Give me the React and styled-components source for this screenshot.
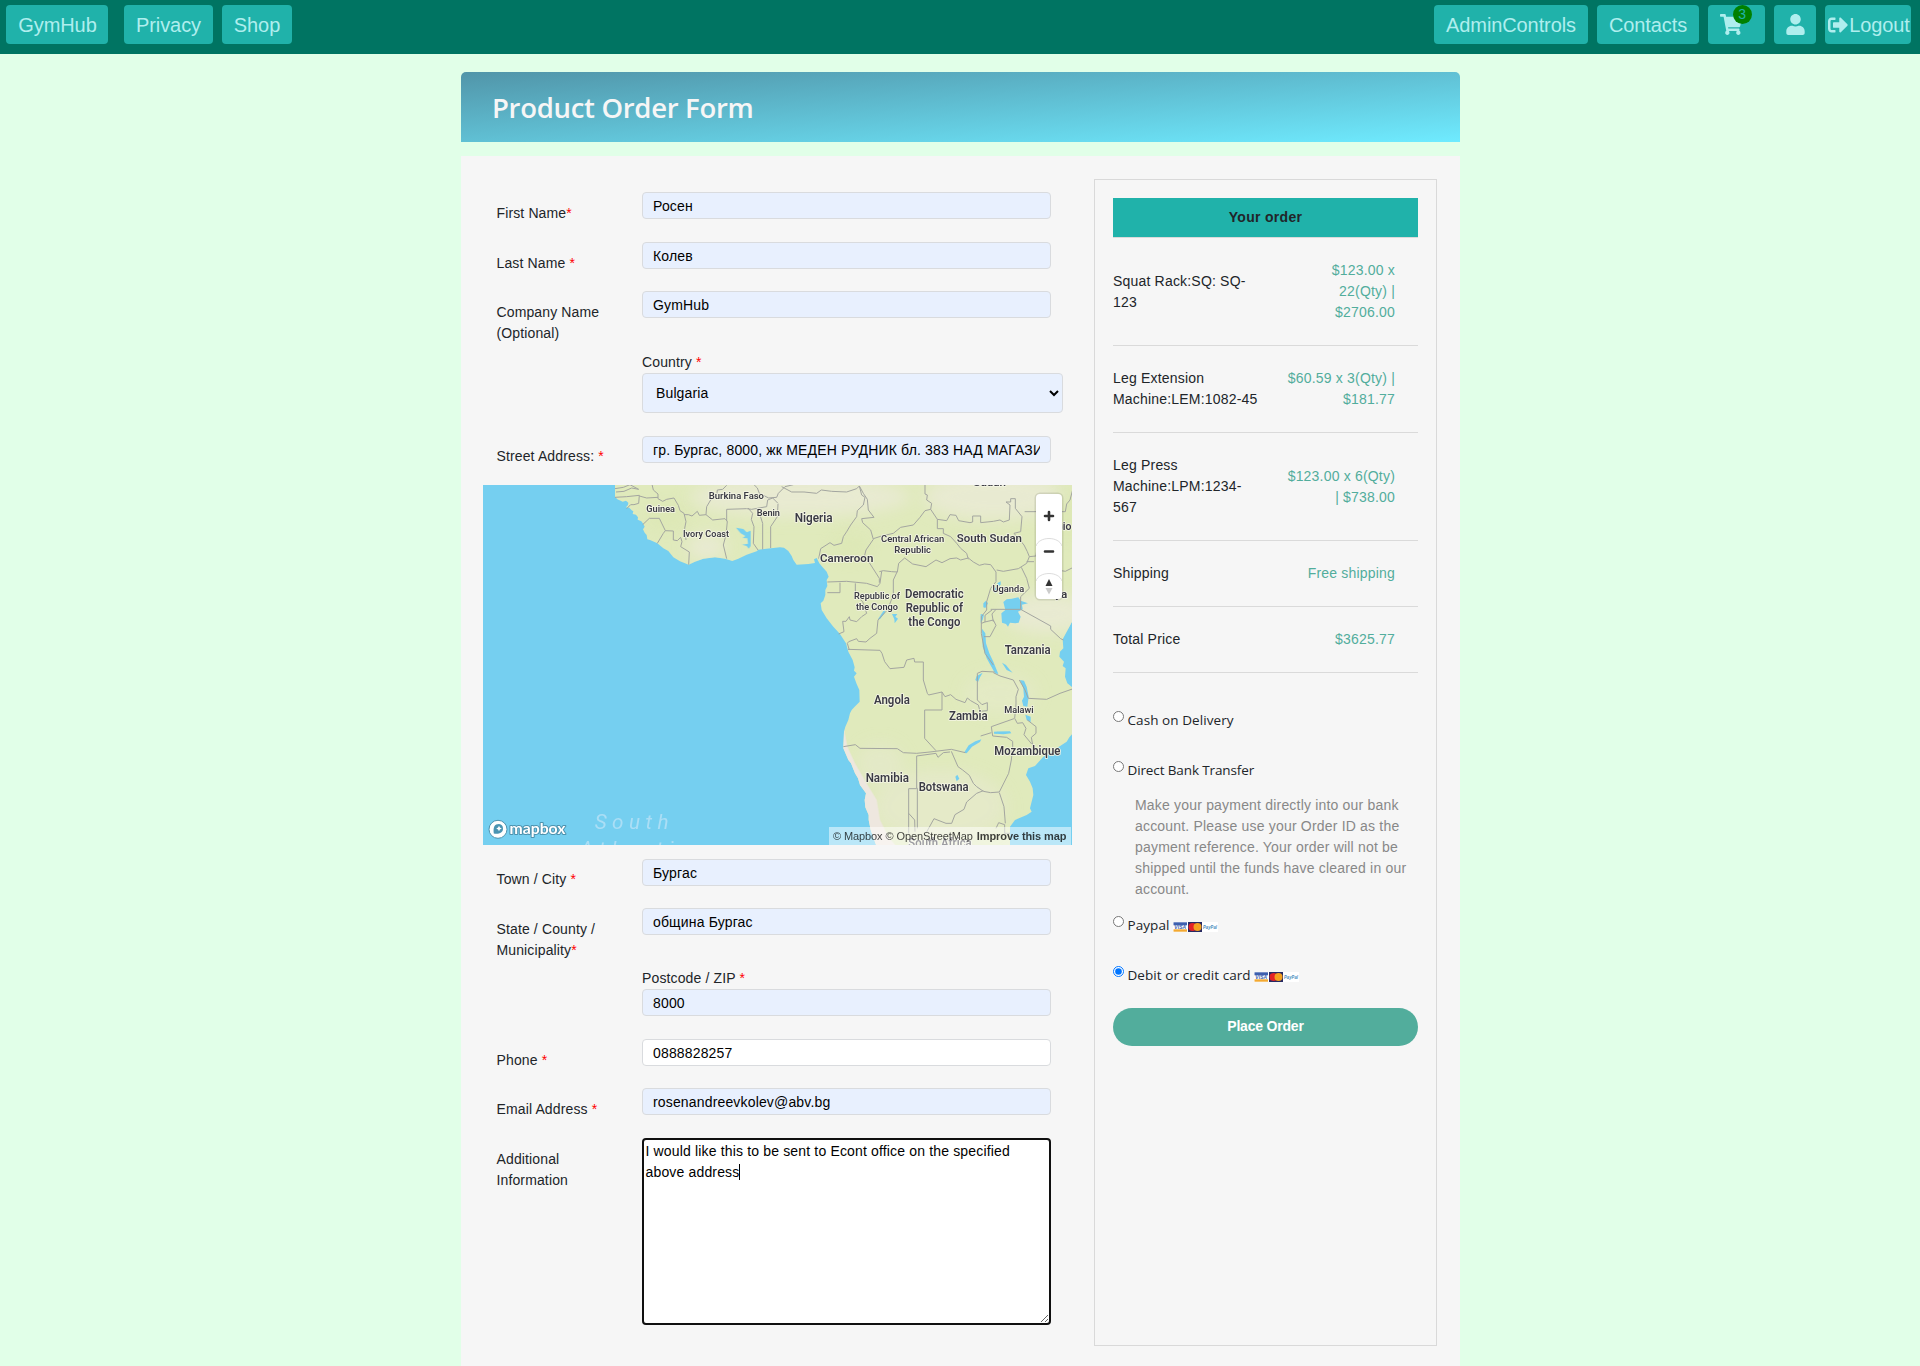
import React from "react";
import styled, { createGlobalStyle } from "styled-components";
import { FaShoppingCart, FaUser, FaSignOutAlt } from "react-icons/fa";

const sans = `"Liberation Sans", Arial, sans-serif`;
const humanist = `"Open Sans", "Noto Sans", sans-serif`;

const GlobalStyle = createGlobalStyle`
  * { box-sizing: border-box; }
  body { margin: 0; background: #e1ffe8; font-family: ${sans}; color: #212529; overflow: hidden; }
`;

const Page = styled.div`
  height: 1366px;
  overflow: hidden;
  background: #e1ffe8;
`;

/* ---------- navigation ---------- */
const Nav = styled.nav`
  display: flex;
  justify-content: space-between;
  height: 54px;
  padding: 5px 9px 10px 6px;
  background: #007462;
`;
const NavGroup = styled.div`
  display: flex;
  gap: 9px;
`;
const NavButton = styled.a`
  display: flex;
  align-items: center;
  justify-content: center;
  width: ${(p) => p.$w}px;
  height: 39px;
  margin-right: ${(p) => p.$after || 0}px;
  padding-left: ${(p) => p.$nudge || 0}px;
  border-radius: 4px;
  background: #20b2aa;
  color: #afeeee;
  font-size: 20px;
  line-height: 30px;
  letter-spacing: -0.1px;
  white-space: nowrap;
  svg { flex: none; }
`;
const CartWrap = styled.span`
  position: relative;
  display: flex;
  margin-right: 12px;
  svg { width: 22px; height: 21px; }
`;
const CartBadge = styled.span`
  position: absolute;
  left: 13px;
  top: -9px;
  width: 19px;
  height: 19px;
  border-radius: 50%;
  background: #008000;
  color: #20b2aa;
  font-size: 14px;
  line-height: 19px;
  text-align: center;
`;

/* ---------- page frame ---------- */
const Container = styled.main`
  width: 999px;
  margin: 18px 0 0 461px;
`;
const TitleBar = styled.header`
  display: flex;
  align-items: center;
  height: 70px;
  padding: 2px 0 0 31px;
  border-radius: 5px 5px 0 0;
  background: linear-gradient(to bottom right, #5195a9, #6febff);
`;
const Title = styled.h1`
  margin: 0;
  color: #f6f6f6;
  font: 600 27.5px/36px ${humanist};
  letter-spacing: -0.3px;
`;
const Panel = styled.div`
  display: flex;
  align-items: flex-start;
  gap: 22px;
  height: 1260px;
  margin-top: 14px;
  padding: 23px 23px 0 22px;
  background: #f6f6f6;
`;

/* ---------- form ---------- */
const Form = styled.form`
  width: 589px;
  padding-top: 13px;
`;
const Row = styled.div`
  display: grid;
  grid-template-columns: 145.5px 1fr;
  height: ${(p) => p.$h}px;
  padding-left: 13.5px;
`;
const Label = styled.label`
  padding-top: ${(p) => p.$top ?? 11}px;
  font-size: 14px;
  line-height: 21px;
  letter-spacing: 0.13px;
  white-space: pre-line;
`;
const Star = styled.span`
  color: #f00;
`;
const Field = styled.div`
  position: relative;
  grid-column: 2;
`;
const FieldCaption = styled.div`
  height: 21px;
  font-size: 14px;
  line-height: 20px;
  letter-spacing: 0.13px;
`;
const Input = styled.input`
  display: block;
  width: 409px;
  height: 27px;
  padding: 0 10px;
  border: 1px solid #d9dbde;
  border-radius: 4px;
  background: ${(p) => (p.$plain ? "#fff" : "#e8f0fe")};
  color: #000;
  font: 14px/21px ${sans};
  letter-spacing: 0.16px;
`;
const Select = styled.select`
  display: block;
  width: 421px;
  height: 40px;
  padding: 0 0 0 9px;
  border: 1px solid #d9dbde;
  border-radius: 4px;
  background: #e8f0fe;
  color: #000;
  font: 14px/21px ${sans};
  letter-spacing: 0.13px;
`;
const TextArea = styled.textarea`
  display: block;
  width: 409px;
  height: 187px;
  padding: 1px 1.5px;
  border: 2px solid #101010;
  border-radius: 4px;
  background: #fff;
  color: #000;
  font: 14px/21px ${sans};
  letter-spacing: 0.16px;
`;
const Caret = styled.span`
  position: absolute;
  left: 97px;
  top: 26px;
  width: 1px;
  height: 16px;
  background: #000;
`;

/* ---------- map ---------- */
const MapBox = styled.div`
  position: relative;
  height: 360px;
  margin-bottom: 14px;
  overflow: hidden;
  background: #75cff0;
`;
const MapControls = styled.div`
  position: absolute;
  right: 10px;
  top: 9px;
  width: 26px;
  height: 105px;
  border-radius: 4px;
  background: #fff;
  box-shadow: 0 0 0 1.5px rgba(0, 0, 0, 0.1);
  svg { display: block; }
`;
const Attribution = styled.div`
  position: absolute;
  right: 1px;
  bottom: 0;
  display: flex;
  gap: 3px;
  width: 242px;
  height: 18px;
  padding-left: 4px;
  background: rgba(255, 255, 255, 0.5);
  color: rgba(0, 0, 0, 0.75);
  font-size: 11px;
  line-height: 18px;
  letter-spacing: -0.1px;
  white-space: nowrap;
  b { margin-left: 1px; letter-spacing: -0.1px; }
`;

/* ---------- order summary ---------- */
const Summary = styled.aside`
  width: 343px;
  height: 1167px;
  padding: 18px 18px 0;
  border: 1px solid #d9d9d9;
  font-size: 14px;
  letter-spacing: 0.19px;
`;
const SummaryHead = styled.div`
  height: 40px;
  border-bottom: 1px solid #dadada;
  background: #20b2aa;
  background-clip: padding-box;
  font-weight: bold;
  line-height: 38px;
  letter-spacing: 0.3px;
  text-align: center;
`;
const SummaryRow = styled.div`
  display: flex;
  align-items: center;
  justify-content: space-between;
  height: ${(p) => p.$h}px;
  padding-right: 23px;
  border-bottom: 1px solid #dadada;
  line-height: 21px;
  white-space: pre-line;
`;
const Price = styled.span`
  color: #52ad9c;
  text-align: right;
`;
const Payments = styled.div`
  padding-top: 29px;
`;
const Option = styled.label`
  display: flex;
  align-items: flex-start;
  height: ${(p) => p.$h}px;
  color: #212529;
  font: 13.5px/21px ${humanist};
  letter-spacing: ${(p) => p.$spacing ?? 0.07}px;
  white-space: nowrap;
`;
const Radio = styled.input`
  width: 11px;
  height: 11px;
  margin: 9px 3.5px 0 0;
`;
const OptionText = styled.span`
  margin-top: 8px;
`;
const Cards = styled.svg`
  width: 45px;
  height: 10px;
  margin: 15px 0 0 3.5px;
`;
const Hint = styled.p`
  height: 105px;
  margin: 0 0 7px;
  padding-left: 22px;
  color: #888;
  line-height: 21px;
  white-space: pre-line;
`;
const PlaceOrder = styled.button`
  display: block;
  width: 100%;
  height: 38px;
  padding: 0 0 1px;
  border: 0;
  border-radius: 19px;
  background: #52ad9c;
  color: #fff;
  font: bold 14px/21px ${sans};
  letter-spacing: -0.2px;
`;

const places = [
  ["Guinea", 542, 96, 86, 28],
  ["Burkina Faso", 769, 58, 166, 28],
  ["Benin", 865, 107, 70, 28],
  ["Ivory Coast", 678, 171, 138, 28],
  ["Nigeria", 1001, 126, 114, 36],
  ["Cameroon", 1100, 247, 160, 35],
  ["Central African", 1298, 186, 190, 29],
  ["Republic", 1298, 219, 110, 29],
  ["South Sudan", 1528, 185, 196, 35],
  ["Sudan", 1529, 19, 98, 35],
  ["io", 1761, 150, 26, 35],
  ["ya", 1744, 354, 36, 35],
  ["Uganda", 1585, 335, 95, 29],
  ["Republic of", 1191, 357, 138, 29],
  ["the Congo", 1191, 390, 126, 29],
  ["Democratic", 1363, 354, 176, 36],
  ["Republic of", 1363, 395, 172, 36],
  ["the Congo", 1363, 437, 156, 36],
  ["Tanzania", 1643, 523, 138, 36],
  ["Angola", 1236, 671, 108, 36],
  ["Zambia", 1465, 719, 116, 36],
  ["Malawi", 1617, 698, 88, 29],
  ["Mozambique", 1642, 824, 198, 36],
  ["Namibia", 1222, 907, 130, 36],
  ["Botswana", 1391, 934, 150, 36],
  ["South Africa", 1380, 1102, 190, 36],
];

function AfricaMap() {
  const land =
    "M405 0V50L412 58 422 62 428 65 438 62 445 68 444 75 438 82 448 83 455 91 460 94 458 102 468 104 474 112 473 119 484 124 490 132 494 140 489 148 494 158 500 165 502 178 510 180 532 190 550 205 565 213 580 232 600 244 626 254 645 245 670 236 705 232 735 236 757 243 775 236 800 224 830 214 835 209 900 202 912 203 925 213 935 228 940 240 950 254 985 252 1005 249 1002 238 1010 234 1018 250 1028 262 1040 275 1046 290 1040 300 1042 318 1036 330 1036 345 1030 362 1022 370 1025 390 1040 415 1060 440 1080 462 1098 490 1105 515 1118 540 1124 562 1122 572 1130 580 1122 590 1130 612 1138 630 1139 665 1124 680 1115 690 1110 700 1105 720 1096 740 1092 755 1090 805 1105 840 1113 850 1125 880 1134 895 1140 915 1158 940 1154 960 1156 982 1166 1005 1166 1020 1172 1050 1190 1100H1590V1040L1605 1020 1640 1005 1655 995 1650 985 1660 945 1658 925 1650 905 1638 885 1645 865 1665 858 1690 830 1730 805 1760 785 1768 772 1780 758V624L1762 610 1755 590 1757 565 1748 558 1752 545 1738 530 1740 515 1750 505 1748 478 1760 455 1780 418V0Z";
  return (
    <svg width="589" height="360" viewBox="0 0 589 360">
      <defs>
        <clipPath id="land"><path d={land} /></clipPath>
        <filter id="soft" x="-50%" y="-50%" width="200%" height="200%"><feGaussianBlur stdDeviation="22" /></filter>
      </defs>
      <g transform="translate(-3 -5) scale(.333333)">
        <path d={land} fill="#e0eabc" />
        <g clipPath="url(#land)">
          <g filter="url(#soft)" fill="#e8ead1">
            <ellipse cx="960" cy="50" rx="330" ry="60" />
            <ellipse cx="680" cy="200" rx="60" ry="40" />
            <ellipse cx="1540" cy="50" rx="210" ry="70" />
            <ellipse cx="1700" cy="400" rx="130" ry="60" />
            <ellipse cx="1560" cy="640" rx="110" ry="60" opacity=".4" />
            <ellipse cx="1380" cy="980" rx="200" ry="110" opacity=".6" />
            <ellipse cx="1200" cy="850" rx="70" ry="60" opacity=".5" />
          </g>
          <g filter="url(#soft)" fill="#d5e4a5" opacity=".25">
            <ellipse cx="1760" cy="110" rx="40" ry="80" />
            <ellipse cx="560" cy="110" rx="60" ry="40" />
            <ellipse cx="1110" cy="200" rx="60" ry="40" />
          </g>
          <path d="M1090 740L1102 800 1125 850 1160 910 1190 960 1200 1020 1225 1070 1250 1100H1170L1140 960 1085 830Z" fill="#eee7df" />
        </g>
        <g fill="#75cff0">
          <path d="M768 143L790 147 800 157 812 152V198L806 206 800 198 786 194 804 191 802 175 788 174 796 168 782 160Z" />
          <g transform="translate(-100 0)">
            <path d="M1670 366L1680 358 1695 356 1715 352 1722 362 1744 370 1726 374 1728 388 1714 395 1722 410 1716 428 1706 430 1690 428 1684 440 1678 432 1666 428 1664 400 1676 390Z" />
            <path d="M1652 310L1662 304 1662 314 1654 320ZM1610 370L1618 362 1624 370 1616 384 1610 382ZM1602 402L1612 404 1608 420 1602 428ZM1638 330L1650 320 1660 328 1646 340Z" />
            <path d="M1606 446L1616 460 1618 490 1628 520 1640 545 1655 582 1645 580 1620 535 1608 500Z" />
          </g>
          <path d="M1566 548L1578 555 1588 568 1598 578 1580 570Z" />
          <path d="M1490 588L1508 578 1500 592 1494 606 1486 600Z" />
          <path d="M1620 600L1632 602 1640 620 1646 650 1642 680 1630 678 1626 662 1632 650 1630 625ZM1636 704L1652 710 1652 726 1640 720Z" />
          <path d="M1542 755L1590 754 1594 760 1570 763 1542 761ZM1452 818L1466 796 1486 784 1504 778 1500 786 1476 800 1460 820Z" />
          <path d="M1426 890L1432 884 1438 896 1430 904ZM1236 402L1252 402 1246 410 1254 416 1244 430 1243 418ZM1194 418L1212 390 1216 396 1200 418Z" />
          <path d="M962 354L966 354 965 361 962 361Z" />
        </g>
        <g fill="none" stroke="#a3a5a0" strokeWidth="3" strokeLinejoin="round">
          <path d="M405 26L430 22 450 14 476 28 455 24 432 34 408 36M405 52L440 50 478 46 476 70 462 74 452 74 440 86" />
          <path d="M513 0L520 30 534 42V56L548 64 560 58 582 54 595 76 600 92 612 100 618 125 614 145 618 180M478 48L500 54 534 52" />
          <path d="M488 134L508 115H538L556 152 550 160 532 190M556 152L580 153V180L592 182 602 172 606 185 602 200 628 216 626 254" />
          <path d="M612 104L625 104 636 108 652 94 658 106 678 104 698 120 735 116 742 124 738 165 730 195 740 236" />
          <path d="M678 104L680 80 692 60 710 48 712 30 728 28 740 16M740 124V88L800 86 815 88 860 80 863 60 878 54 894 70M804 84L818 100 814 118 822 140 820 190 834 210M830 88L840 105 848 130V208M894 72L892 110 872 140V204M822 14L832 24 838 40 866 54 890 52 895 40 915 20 940 14" />
          <path d="M905 20L935 36 972 36 1010 40 1024 30 1055 34 1100 36 1130 26 1138 18 1150 40 1162 58 1165 90 1182 112 1145 116 1148 128 1172 150 1180 178 1158 210 1154 226 1198 295V308M1138 18L1145 45 1155 52 1150 75 1132 92 1130 110 1112 135 1100 155 1090 170 1085 190 1062 196 1050 188 1022 206 1016 236" />
          <path d="M1180 176L1205 168 1240 160 1262 142 1300 135 1320 112 1335 92 1352 88 1355 70 1340 60 1342 45 1335 42V14M1352 88L1372 118 1372 146H1390V160L1412 170 1430 190 1442 205 1460 220 1465 238M1372 118L1400 122 1410 104 1428 106 1436 122 1470 128 1478 126V108H1502V128L1540 124 1560 120 1570 126 1588 120 1590 75 1578 66H1592V56H1606V85L1626 110 1622 155 1602 160 1615 175 1632 195 1642 215 1648 230" />
          <path d="M1198 275L1210 272 1235 275 1252 276 1256 250 1274 234 1298 252 1338 260 1368 240 1386 248 1410 236 1430 234 1442 240 1465 234 1480 246 1498 256 1514 252 1532 254 1548 276V305L1532 325 1520 365V390L1504 410V460L1515 520 1540 555M1550 270L1570 274 1615 266 1640 250 1648 230 1668 228 1672 195 1680 120M1782 14L1770 60 1760 72 1756 95 1634 95M1740 155L1748 145 1736 80M1640 245L1662 245M1624 262L1640 295 1648 325 1622 350 1622 388H1532M1730 270L1756 274 1780 262" />
          <path d="M1042 306L1100 304 1160 310 1192 320 1200 310 1205 274M1042 338H1080V308M1126 310V345L1148 365 1160 400 1145 410 1130 425 1110 420 1108 410 1098 424 1088 424 1092 455 1076 462M1252 274L1240 300V345L1222 390 1194 420 1190 460 1170 475 1158 486 1135 484 1130 476 1106 485 1102 490 1108 510" />
          <path d="M1104 508L1200 511 1206 520 1214 545 1230 566 1272 562 1280 540 1302 535 1304 546H1330V600L1342 640 1346 645 1386 636V690H1334V775L1368 812" />
          <path d="M1386 636L1395 650 1412 644 1428 658 1455 668 1462 654 1472 662 1495 675 1500 694 1522 692V668L1506 674 1492 660V580L1506 574 1544 576M1622 388L1712 438V448L1742 476 1750 480M1536 390L1515 406V426L1504 430M1515 426L1540 420 1548 436 1530 470 1512 470M1548 388L1536 402 1540 425" />
          <path d="M1540 578L1560 588 1600 600 1615 628 1608 650V672L1604 715 1612 730 1628 728 1638 745 1632 764 1655 792M1618 600L1635 630 1645 655 1700 658 1740 640 1780 626M1602 716L1534 740 1538 768 1580 772 1598 784V800L1594 840 1586 880 1558 936 1532 938 1510 934 1490 920 1480 910 1468 886 1448 870 1434 860 1414 814M1642 720L1668 740V760L1654 772 1658 795M1502 768L1534 758" />
          <path d="M1090 800L1126 794 1140 805 1252 806 1270 818 1310 820 1350 816 1414 808 1456 818M1312 1045V925H1310V828L1368 820 1374 832 1390 818 1410 816M1286 1060V926H1310M1286 1000L1304 1020 1305 1055M1340 1056L1362 1016 1398 1030 1415 1030 1425 1004 1452 988 1460 966 1490 940 1510 932M1558 938L1572 980 1576 1030M1548 1045L1556 1028 1574 1034V1060H1590" />
        </g>
        <g fontFamily='Roboto, "Open Sans", sans-serif' fontWeight="600" textAnchor="middle" fill="#3b3b44" stroke="#f5f6e6" strokeWidth="5" paintOrder="stroke" strokeLinejoin="round">
          {places.map(([name, x, y, w, size]) => (
            <text key={name + x + y} x={x} y={y} fontSize={size} textLength={w} lengthAdjust="spacingAndGlyphs">{name}</text>
          ))}
        </g>
        <g fontFamily='Roboto, "Open Sans", sans-serif' fontStyle="italic" fill="#abdef5" fontSize="62">
          <text x="344" y="1046" textLength="222">South</text>
          <text x="300" y="1129" textLength="330">Atlantic</text>
        </g>
      </g>
      <g transform="translate(15 344.3)">
        <circle r="9" fill="#fff" stroke="#4d92ae" strokeWidth="1" />
        <path d="M-4.2 4.2C-5-2-3.500-5.200 1-5.200A4.600 4.600 0 0 1 5 -.6C5 3.600.8 5-4.200 4.200Z" fill="#4a94b2" />
        <path d="M1-3.600L1.900-1.700 3.800-.8 1.900.1 1 2 .1.1-1.800-.8.1-1.700Z" fill="#fff" />
        <text x="11.500" y="4.800" fontFamily='Lato, "Open Sans", sans-serif' fontWeight="700" fontSize="15" fill="#fff" stroke="#4d92ae" strokeWidth="2" paintOrder="stroke" strokeLinejoin="round" textLength="56" lengthAdjust="spacingAndGlyphs">mapbox</text>
      </g>
    </svg>
  );
}

function ControlIcons() {
  return (
    <svg width="26" height="105" viewBox="0 0 26 105">
      <g fill="none" stroke="#ddd" strokeWidth="1">
        <path d="M0 52C3 42 23 42 26 52M0 87C3 77 23 77 26 87" />
      </g>
      <g stroke="#333" strokeWidth="2.600" strokeLinecap="round">
        <path d="M9 22H17M13 18V26M9 57.500H17" />
      </g>
      <path d="M9.500 92L13 85 16.500 92Z" fill="#333" />
      <path d="M9.500 94L13 100.500 16.500 94Z" fill="#ccc" />
    </svg>
  );
}

function PaymentCards() {
  return (
    <Cards viewBox="0 0 45 10">
      <rect width="45" height="10" fill="#fff" />
      <rect x=".5" y=".3" width="13.500" height="3" fill="#3d5fae" />
      <rect x=".5" y="7.300" width="13.500" height="2.400" fill="#f3a931" />
      <text x="7.300" y="7" textAnchor="middle" fontFamily="Liberation Sans" fontWeight="bold" fontStyle="italic" fontSize="5" fill="#3d5fae">VISA</text>
      <rect x="15" width="14" height="10" fill="#272a63" />
      <circle cx="19.500" cy="5" r="4" fill="#e32227" />
      <circle cx="24.500" cy="5" r="4" fill="#f5a01f" />
      <text x="37" y="6.900" textAnchor="middle" fontFamily="Liberation Sans" fontWeight="bold" fontStyle="italic" fontSize="5" fill="#4b8dbd" textLength="14" lengthAdjust="spacingAndGlyphs">PayPal</text>
    </Cards>
  );
}

function TextRow({ label, star, value, h, top, plain }) {
  return (
    <Row $h={h}>
      <Label $top={top}>{label}{star && <Star>*</Star>}</Label>
      <Field><Input defaultValue={value} $plain={plain} /></Field>
    </Row>
  );
}

const items = [
  ["Squat Rack:SQ: SQ-\n123", "$123.00 x\n22(Qty) |\n$2706.00", 108],
  ["Leg Extension\nMachine:LEM:1082-45", "$60.59 x 3(Qty) |\n$181.77", 87],
  ["Leg Press\nMachine:LPM:1234-\n567", "$123.00 x 6(Qty)\n| $738.00", 108],
  ["Shipping", "Free shipping", 66],
  ["Total Price", "$3625.77", 66],
];

export default function App() {
  return (
    <Page>
      <GlobalStyle />
      <Nav>
        <NavGroup>
          <NavButton $w={102} $after={7} $nudge={1}>GymHub</NavButton>
          <NavButton $w={89}>Privacy</NavButton>
          <NavButton $w={70}>Shop</NavButton>
        </NavGroup>
        <NavGroup>
          <NavButton $w={154}>AdminControls</NavButton>
          <NavButton $w={102}>Contacts</NavButton>
          <NavButton $w={57}>
            <CartWrap><FaShoppingCart preserveAspectRatio="none" /><CartBadge>3</CartBadge></CartWrap>
          </NavButton>
          <NavButton $w={42}><FaUser size={21} /></NavButton>
          <NavButton $w={86} $nudge={1.5}><FaSignOutAlt size={20} />&#8202;Logout</NavButton>
        </NavGroup>
      </Nav>
      <Container>
        <TitleBar><Title>Product Order Form</Title></TitleBar>
        <Panel>
          <Form>
            <TextRow label="First Name" star value="Росен" h={50} />
            <TextRow label="Last Name " star value="Колев" h={49} />
            <TextRow label={"Company Name\n(Optional)"} value="GymHub" h={61} />
            <Row $h={84}>
              <Field>
                <FieldCaption>Country <Star>*</Star></FieldCaption>
                <Select defaultValue="Bulgaria"><option>Bulgaria</option></Select>
              </Field>
            </Row>
            <TextRow label="Street Address: " star value="гр. Бургас, 8000, жк МЕДЕН РУДНИК бл. 383 НАД МАГАЗИН" h={49} top={10} />
            <MapBox>
              <AfricaMap />
              <MapControls><ControlIcons /></MapControls>
              <Attribution><span>© Mapbox</span><span>© OpenStreetMap</span><b>Improve this map</b></Attribution>
            </MapBox>
            <TextRow label="Town / City " star value="Бургас" h={49} top={10} />
            <TextRow label={"State / County /\nMunicipality"} star value="община Бургас" h={60} />
            <Row $h={71}>
              <Field>
                <FieldCaption>Postcode / ZIP <Star>*</Star></FieldCaption>
                <Input defaultValue="8000" />
              </Field>
            </Row>
            <TextRow label="Phone " star value="0888828257" h={49} plain />
            <TextRow label="Email Address " star value="rosenandreevkolev@abv.bg" h={50} />
            <Row $h={187}>
              <Label>{"Additional\nInformation"}</Label>
              <Field>
                <TextArea defaultValue="I would like this to be sent to Econt office on the specified above address" />
                <Caret />
              </Field>
            </Row>
          </Form>
          <Summary>
            <SummaryHead>Your order</SummaryHead>
            {items.map(([name, price, h]) => (
              <SummaryRow key={name} $h={h}><span>{name}</span><Price>{price}</Price></SummaryRow>
            ))}
            <Payments>
              <Option $h={50}><Radio type="radio" name="pay" /><OptionText>Cash on Delivery</OptionText></Option>
              <Option $h={43} $spacing={-0.12}><Radio type="radio" name="pay" /><OptionText>Direct Bank Transfer</OptionText></Option>
              <Hint>{"Make your payment directly into our bank\naccount. Please use your Order ID as the\npayment reference. Your order will not be\nshipped until the funds have cleared in our\naccount."}</Hint>
              <Option $h={50}><Radio type="radio" name="pay" /><OptionText>Paypal</OptionText><PaymentCards /></Option>
              <Option $h={51}><Radio type="radio" name="pay" defaultChecked /><OptionText>Debit or credit card</OptionText><PaymentCards /></Option>
            </Payments>
            <PlaceOrder type="button">Place Order</PlaceOrder>
          </Summary>
        </Panel>
      </Container>
    </Page>
  );
}
